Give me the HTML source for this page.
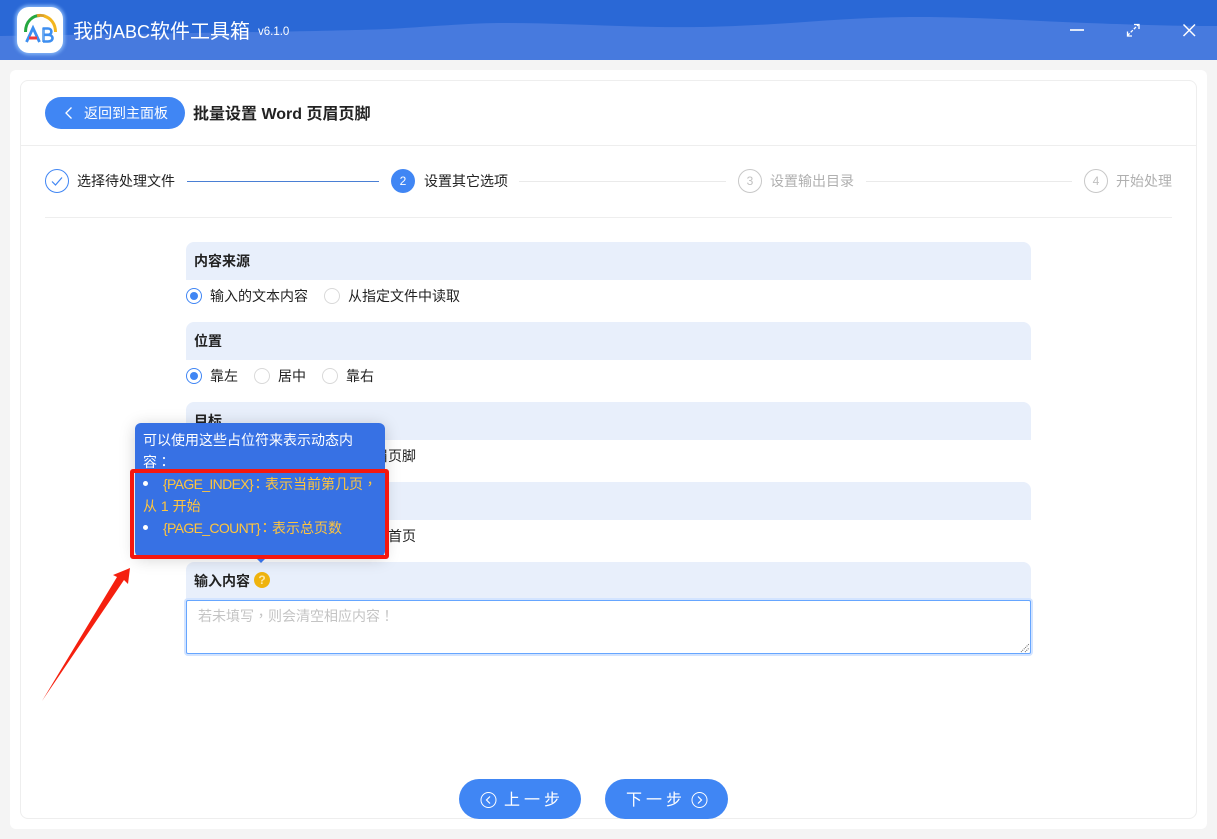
<!DOCTYPE html>
<html lang="zh-CN">
<head>
<meta charset="utf-8">
<title>我的ABC软件工具箱</title>
<style>
html,body{margin:0;padding:0;width:1217px;height:839px;overflow:hidden;background:#f4f4f4;font-family:"Liberation Sans","Noto Sans CJK SC",sans-serif;color:#222;font-size:14px}
.a{position:absolute;white-space:nowrap}
.t{line-height:20px;height:20px}
.tc{font-family:"Liberation Sans","Noto Sans CJK TC",sans-serif}
.sec{position:absolute;left:186px;width:845px;height:38px;background:#e8effb;border-radius:8px 8px 0 0}
.sec b{position:absolute;left:8px;top:9px;line-height:20px;font-size:14px;color:#222;font-weight:700;white-space:nowrap}
.r{position:absolute;width:14px;height:14px;border:1px solid #d9d9d9;border-radius:50%;background:#fff}
.r.on{border-color:#4086f4}
.r.on:after{content:"";position:absolute;left:3px;top:3px;width:8px;height:8px;border-radius:50%;background:#4086f4}
.line{position:absolute;height:1px;background:#eaeaea}
.num{position:absolute;width:22px;height:22px;border:1px solid #c8c8c8;border-radius:50%;text-align:center;line-height:23px;font-size:12px;color:#c0c0c0}
.btn{position:absolute;top:779px;height:40px;border-radius:20px;background:#4086f4;color:#fff}
.y{color:#ffc53d;line-height:22px;height:22px}
.lat{letter-spacing:-.65px}
.dot{position:absolute;width:5px;height:5px;border-radius:50%;background:#fff}
</style>
</head>
<body>
<div class="a" style="left:0;top:0;width:1217px;height:60px;background:#2a68d6;overflow:hidden">
<svg width="1217" height="60" style="position:absolute;left:0;top:0"><path d="M0 36C120 34 300 32 388 29C440 26 470 23 505 23C570 23 630 28 700 27C780 26 840 17 916 17C980 17 1030 21 1087 23C1140 25 1180 26 1217 26V60H0Z" fill="#477ade"/></svg>
</div>
<div class="a" style="left:17px;top:7px;width:46px;height:46px;border-radius:12px;background:#fff;box-shadow:0 0 3px 2px #7fb0f5"></div>
<svg class="a" style="left:16px;top:6px" width="48" height="48" viewBox="0 0 48 48" fill="none">
<path d="M9.500 26C9.500 15 17 9.500 24 9.500" stroke="#25a73f" stroke-width="3"/>
<path d="M21 9.700C23 9.300 27 9.300 29 10" stroke="#d9a02a" stroke-width="3"/>
<path d="M28 10C35 12 39.500 18 39.500 26" stroke="#f3b61f" stroke-width="3"/>
<path d="M10.500 36L17 22L23.500 36" stroke="#3d8ef0" stroke-width="2.800"/>
<path d="M13 32H21" stroke="#ef3b3b" stroke-width="3"/>
<path d="M27.500 21.500V36" stroke="#6aa8ef" stroke-width="2.800"/>
<path d="M27 22.500H32C36.500 22.500 36.500 28.800 32 28.800H28M32 28.800C38 28.800 38 35.500 32 35.500H27" stroke="#3d8ef0" stroke-width="2.600"/>
</svg>
<div class="a" style="left:73px;top:18px;font-size:20px;line-height:28px;color:#fff">我的<span style="font-size:18px">ABC</span>软件工具箱</div>
<div class="a" style="left:258px;top:24px;font-size:11.500px;line-height:16px;color:#fff">v6.1.0</div>
<svg class="a" style="left:1060px;top:15px" width="140" height="30" fill="none" stroke="#fff">
<path d="M10 15H24" stroke="#dfe8f9" stroke-width="2"/>
<path d="M67.500 20.500L78.500 9.500" stroke-width="1.300" stroke-dasharray="3 1.500"/>
<path d="M67.500 16.500V21H72M74 9.500H79V14" stroke-width="1.300"/>
<path d="M123.500 9.500L135 21M135 9.500L123.500 21" stroke-width="1.500"/>
</svg>

<div class="a" style="left:10px;top:70px;width:1197px;height:759px;background:#fff;border-radius:6px"></div>
<div class="a" style="left:20px;top:80px;width:1175px;height:737px;background:#fff;border:1px solid #eeeeee;border-radius:8px"></div>

<div class="a" style="left:45px;top:97px;width:140px;height:32px;border-radius:16px;background:#4086f4"></div>
<svg class="a" style="left:62px;top:105px" width="14" height="16" fill="none" stroke="#fff" stroke-width="1.300"><path d="M9.500 2.500L4 8L9.500 13.500"/></svg>
<div class="a t" style="left:84px;top:103px;font-size:14px;color:#fff">返回到主面板</div>
<div class="a" style="left:193px;top:104px;font-size:16px;line-height:22px;font-weight:700;color:#222">批量设置 Word 页眉页脚</div>
<div class="line" style="left:21px;top:145px;width:1175px;background:#eeeeee"></div>

<svg class="a" style="left:45px;top:169px" width="24" height="24" fill="none"><circle cx="12" cy="12" r="11.500" stroke="#4086f4"/><path d="M7 12.500L10.500 16L17 8.500" stroke="#4086f4" stroke-width="1.200"/></svg>
<div class="a t" style="left:77px;top:171px">选择待处理文件</div>
<div class="line" style="left:187px;top:181px;width:192px;background:#4a7fd4"></div>
<div class="a" style="left:391px;top:169px;width:24px;height:24px;border-radius:50%;background:#4086f4;color:#fff;text-align:center;line-height:25px;font-size:12px">2</div>
<div class="a t" style="left:424px;top:171px">设置其它选项</div>
<div class="line" style="left:519px;top:181px;width:207px"></div>
<div class="num" style="left:738px;top:169px">3</div>
<div class="a t" style="left:770px;top:171px;color:#b0b0b0">设置输出目录</div>
<div class="line" style="left:866px;top:181px;width:206px"></div>
<div class="num" style="left:1084px;top:169px">4</div>
<div class="a t" style="left:1116px;top:171px;color:#b0b0b0">开始处理</div>
<div class="line" style="left:45px;top:217px;width:1127px;background:#eeeeee"></div>

<div class="sec" style="top:242px"><b>内容来源</b></div>
<div class="r on" style="left:186px;top:288px"></div>
<div class="a t" style="left:210px;top:286px">输入的文本内容</div>
<div class="r" style="left:324px;top:288px"></div>
<div class="a t" style="left:348px;top:286px">从指定文件中读取</div>

<div class="sec" style="top:322px"><b>位置</b></div>
<div class="r on" style="left:186px;top:368px"></div>
<div class="a t" style="left:210px;top:366px">靠左</div>
<div class="r" style="left:254px;top:368px"></div>
<div class="a t" style="left:278px;top:366px">居中</div>
<div class="r" style="left:322px;top:368px"></div>
<div class="a t" style="left:346px;top:366px">靠右</div>

<div class="sec" style="top:402px"><b>目标</b></div>
<div class="a t" style="left:360px;top:446px">页眉页脚</div>
<div class="sec" style="top:482px"></div>
<div class="a t" style="left:374px;top:526px">除首页</div>

<div class="sec" style="top:562px"><b>输入内容</b></div>
<div class="a" style="left:254px;top:572px;width:16px;height:16px;border-radius:50%;background:#efb30d;color:#fde7a6;font-size:12px;font-weight:700;line-height:16px;text-align:center">?</div>
<div class="a" style="left:186px;top:600px;width:843px;height:52px;background:#fff;border:1px solid #66a6ff;border-radius:2px;box-shadow:0 0 0 2px #d3e4ff"></div>
<div class="a tc" lang="zh-TW" style="left:198px;top:606px;line-height:20px;color:#c4c4c4">若未填写，则会清空相应内容！</div>
<svg class="a" style="left:1020px;top:643px" width="10" height="10" stroke="#666" stroke-dasharray="1 1"><path d="M1 9L9 1M5 9L9 5"/></svg>

<div class="a" style="left:135px;top:423px;width:250px;height:134px;background:#3771e4;border-radius:6px;box-shadow:0 2px 16px rgba(0,0,0,.18)"></div>
<div class="a" style="left:143px;top:429px;line-height:22px;color:#fff">可以使用这些占位符来表示动态内<br>容<span class="tc" lang="zh-TW">：</span></div>
<div class="dot" style="left:143px;top:481px"></div>
<div class="a y lat" style="left:163px;top:473px">{PAGE_INDEX}</div>
<div class="a y" style="left:251px;top:473px"><span class="tc" lang="zh-TW">：</span>表示当前第几页<span class="tc" lang="zh-TW">，</span></div>
<div class="a y" style="left:143px;top:495px">从 1 开始</div>
<div class="dot" style="left:143px;top:525px"></div>
<div class="a y lat" style="left:163px;top:517px">{PAGE_COUNT}</div>
<div class="a y" style="left:258px;top:517px"><span class="tc" lang="zh-TW">：</span>表示总页数</div>
<div class="a" style="left:130px;top:469px;width:251px;height:82px;border:4px solid #f5170f;border-radius:3px"></div>
<div class="a" style="left:257px;top:559px;width:0;height:0;border-left:4px solid transparent;border-right:4px solid transparent;border-top:4px solid #3771e4"></div>
<svg class="a" style="left:30px;top:550px" width="120" height="160"><path d="M12 151L87 27L83 25L100 18L98 34L94 30Z" fill="#f5200f"/></svg>

<div class="btn" style="left:459px;width:122px"></div>
<svg class="a" style="left:480px;top:792px" width="17" height="17" fill="none" stroke="#fff"><circle cx="8.500" cy="8" r="7.500"/><path d="M10 4.500L6.500 8L10 11.500" stroke-width="1.200"/></svg>
<div class="a" style="left:504px;top:790px;color:#fff;font-size:16px;line-height:22px;letter-spacing:4px">上一步</div>
<div class="btn" style="left:605px;width:123px"></div>
<div class="a" style="left:626px;top:790px;color:#fff;font-size:16px;line-height:22px;letter-spacing:4px">下一步</div>
<svg class="a" style="left:691px;top:792px" width="17" height="17" fill="none" stroke="#fff"><circle cx="8.500" cy="8" r="7.500"/><path d="M7 4.500L10.500 8L7 11.500" stroke-width="1.200"/></svg>
</body>
</html>
